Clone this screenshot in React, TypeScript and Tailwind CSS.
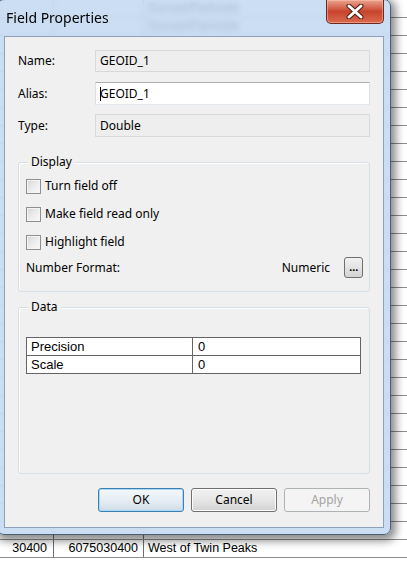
import React from 'react';

// rows of the attribute table behind the dialog; the first two show blurred
// through the glass title bar, the last one below the window
const tracts = Array.from({ length: 31 }, (_, i) => {
  if (i === 30) return { tract: '30400', geoid: '6075030400', name: 'West of Twin Peaks' };
  if (i < 2) return { tract: '', geoid: '', name: 'Sunset/Parkside' };
  return { tract: '', geoid: '', name: '' };
});

function Checkbox({ label }: { label: string }) {
  return (
    <div className="flex h-[28px] items-center gap-[4px]">
      <span className="h-[15px] w-[15px] border border-[#8e8f8f] bg-gradient-to-br from-[#d4d4d4] via-[#ececec] to-[#fafafa] shadow-[inset_0_0_0_1px_#f4f4f4]" />
      <span>{label}</span>
    </div>
  );
}

function GroupBox({ title, className, children }: { title: string; className: string; children: React.ReactNode }) {
  return (
    <div className={`relative rounded-[3px] border border-[#d5dfe5] shadow-[inset_1px_1px_0_#fff] ${className}`}>
      <span className="absolute left-[9px] top-[-9px] bg-[#f0f0f0] px-[3px] leading-[16px]">{title}</span>
      {children}
    </div>
  );
}

function TextRow({ label, value, editable, short }: { label: string; value: string; editable?: boolean; short?: boolean }) {
  const h = short ? 'h-[22px]' : 'h-[23px]';
  return (
    <div className="flex items-center">
      <span className="w-[77px] leading-[16px]">{label}</span>
      <div
        className={
          editable
            ? `flex ${h} flex-1 items-center border border-[#abadb3] border-b-[#e3e9ef] border-x-[#dbdfe6] bg-white pl-[4px]`
            : `flex ${h} flex-1 items-center border border-[#d9d9d9] bg-[#eeeeee] pl-[4px]`
        }
      >
        {editable && <span className="mr-[-1px] h-[14px] w-[1px] bg-black" />}
        <span>{value}</span>
      </div>
    </div>
  );
}

export default function App() {
  return (
    <div className="relative h-[561px] w-[407px] overflow-hidden bg-white font-['Liberation_Sans',Arial,sans-serif] text-[12.5px] text-black">
      {/* table behind the dialog */}
      <div className="flex flex-col">
        {tracts.map((r, i) => (
          <div key={i} className="flex h-[18px] border-b border-[#8c8c8c]">
            <div className="w-[54px] border-r border-[#6f6f6f] pr-[6px] text-right leading-[17px]">{r.tract}</div>
            <div className="w-[90px] border-r border-[#6f6f6f] pr-[5px] text-right leading-[17px]">{r.geoid}</div>
            <div className="flex-1 pl-[4px] leading-[17px]">{r.name}</div>
          </div>
        ))}
      </div>

      {/* dialog window */}
      <div className="absolute left-[-3px] top-[-1px] flex h-[536px] w-[394px] flex-col rounded-[7px] border border-[#4b5d74] bg-[#c2d8f1]/85 shadow-[2px_3px_9px_3px_rgba(0,0,0,0.45)] backdrop-blur-[3px] font-['Noto_Sans','Open_Sans',sans-serif]">
        <div className="flex h-[36px] items-start justify-between">
          <span className="self-center pl-[8px] text-[14px] leading-[18px] text-black">Field Properties</span>
          <button className="mr-[6px] flex h-[24px] w-[58px] items-center justify-center rounded-b-[5px] border border-t-0 border-[#6b2a1f] bg-gradient-to-b from-[#e9a48f] via-[#c8432c] to-[#d96a4e] shadow-[inset_0_0_0_1px_rgba(255,200,180,0.5)]">
            <svg width="18" height="15" viewBox="0 0 18 15">
              <path d="M3 2 L15 13 M15 2 L3 13" stroke="#4a1a12" strokeWidth="5" strokeLinecap="round" />
              <path d="M3 2 L15 13 M15 2 L3 13" stroke="#ffffff" strokeWidth="3" strokeLinecap="round" />
            </svg>
          </button>
        </div>

        <div className="mx-[6px] flex h-[492px] flex-col border border-[#8ea1b8] bg-[#f0f0f0] px-[13px] pt-[13px] text-[12px] text-black">
          <div className="flex flex-col gap-[9px]">
            <TextRow label="Name:" value="GEOID_1" short />
            <div className="mt-[1px]">
              <TextRow label="Alias:" value="GEOID_1" editable />
            </div>
            <TextRow label="Type:" value="Double" />
          </div>

          <GroupBox title="Display" className="mt-[25px] h-[130px] pl-[7px] pr-[6px] pt-[9px]">
            <Checkbox label="Turn field off" />
            <Checkbox label="Make field read only" />
            <Checkbox label="Highlight field" />
            <div className="mt-[1px] flex h-[21px] items-center">
              <span className="flex-1">Number Format:</span>
              <span className="mr-[14px]">Numeric</span>
              <button className="flex h-[21px] w-[19px] items-end justify-center rounded-[3px] border border-[#707070] bg-gradient-to-b from-[#f2f2f2] to-[#d4d4d4] pb-[4px] font-['DejaVu_Sans',sans-serif] text-[9px] font-bold leading-[9px] tracking-[-0.5px]">
                ...
              </button>
            </div>
          </GroupBox>

          <GroupBox title="Data" className="mt-[15px] h-[167px] pl-[7px] pr-[8px] pt-[29px]">
            <div className="border border-[#646464] bg-white font-['Liberation_Sans',Arial,sans-serif] text-[13px]">
              <div className="flex h-[18px] border-b border-[#646464]">
                <span className="w-[166px] border-r border-[#646464] pl-[4px] leading-[18px]">Precision</span>
                <span className="pl-[5px] leading-[18px]">0</span>
              </div>
              <div className="flex h-[17px]">
                <span className="w-[166px] border-r border-[#646464] pl-[4px] leading-[17px]">Scale</span>
                <span className="pl-[5px] leading-[17px]">0</span>
              </div>
            </div>
          </GroupBox>

          <div className="mt-[14px] flex justify-end gap-[7px]">
            <button className="h-[24px] w-[86px] rounded-[3px] border border-[#3c7fb1] bg-gradient-to-b from-[#f3f8fb] via-[#e6eef3] to-[#cfdde7] shadow-[inset_0_0_0_1px_#a7d9f5]">
              OK
            </button>
            <button className="h-[24px] w-[86px] rounded-[3px] border border-[#707070] bg-gradient-to-b from-[#f2f2f2] via-[#e6e6e6] to-[#d2d2d2] shadow-[inset_0_0_0_1px_#fcfcfc]">
              Cancel
            </button>
            <button className="h-[24px] w-[86px] rounded-[3px] border border-[#adb2b5] bg-[#f4f4f4] text-[#a3a3a3]">
              Apply
            </button>
          </div>
        </div>
      </div>
    </div>
  );
}
